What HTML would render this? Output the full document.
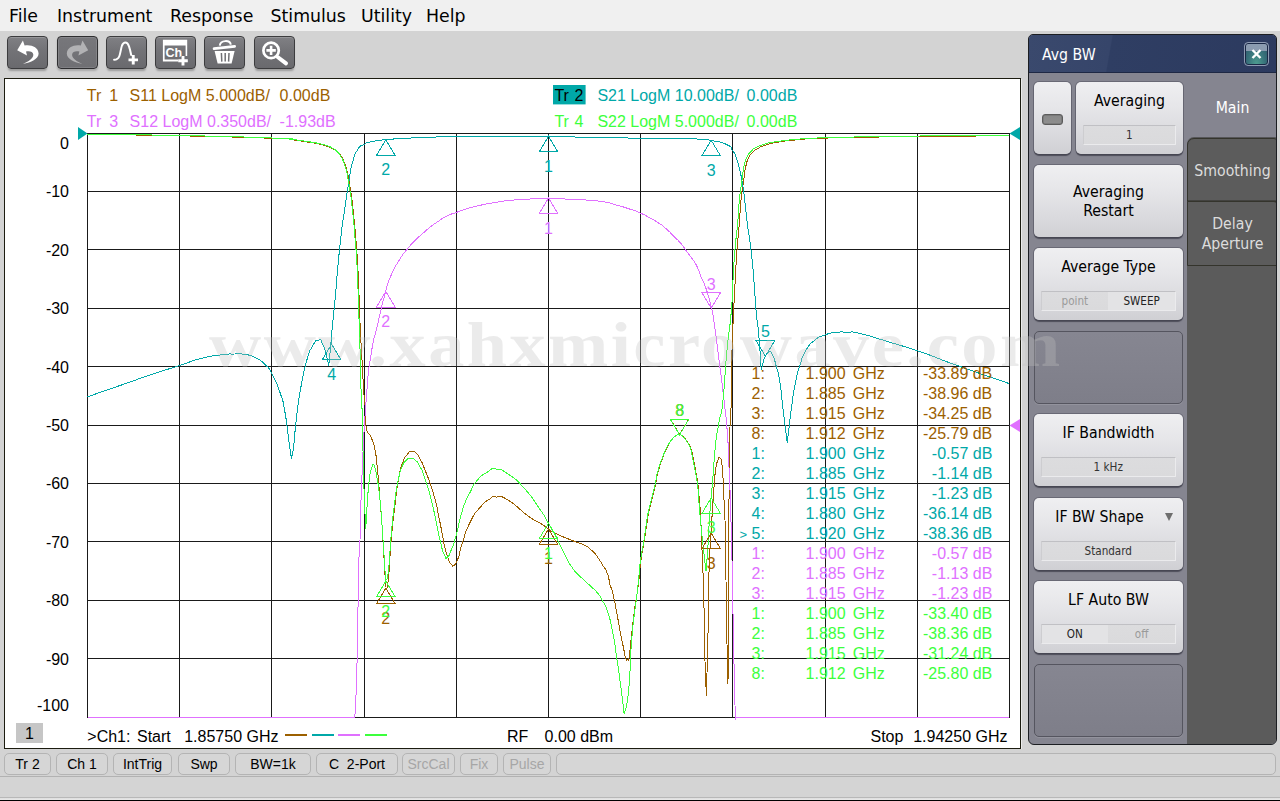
<!DOCTYPE html>
<html lang="en">
<head>
<meta charset="utf-8">
<title>Network Analyzer - Avg BW</title>
<style>
*{box-sizing:border-box;margin:0;padding:0}
html,body{width:1280px;height:801px;overflow:hidden}
body{position:relative;background:#d3d3d3;font-family:"Liberation Sans",sans-serif;color:#000}
.abs{position:absolute}
#menubar{left:0;top:0;width:1280px;height:31px;background:#f0f0f0}
#menubar span{position:absolute;top:4px;font-family:"DejaVu Sans","Liberation Sans",sans-serif;font-size:17.35px;line-height:24px;color:#000;white-space:nowrap}
#toolbar{left:0;top:31px;width:1280px;height:47px;background:#d3d3d3}
.tb{position:absolute;top:36px;width:41px;height:33px;border-radius:4px;border:1px solid #3c3c3e;background:linear-gradient(#808084,#727276 45%,#6a6a6e);box-shadow:0 3px 2px -1px rgba(0,0,0,.27), inset 0 1px 0 rgba(255,255,255,.18)}
.tb svg{position:absolute;left:0;top:0}
.tb.dis{background:linear-gradient(#77777b,#6f6f73);border-color:#2e2e30;box-shadow:0 2px 2px rgba(0,0,0,.2), inset 0 0 0 1px rgba(255,255,255,.12)}
#plotwin{left:4px;top:78px;width:1017px;height:671px;background:#fff;border:1px solid #1c1c10;box-shadow:1px 1px 0 #ececec}
#plot{position:absolute;left:0;top:0}
#wm{left:208.5px;top:308px;font-family:"Liberation Serif",serif;font-weight:bold;font-size:64px;line-height:74px;letter-spacing:2.17px;transform-origin:0 0;transform:scaleX(1.13);color:rgba(192,192,192,.32);white-space:nowrap;pointer-events:none}
/* status bar */
#status{left:0;top:749px;width:1280px;height:28px;background:#d3d3d3}
.sb{position:absolute;top:753px;height:22px;border:1px solid #b4b4b4;border-radius:5px;background:#d6d6d6;font-size:14px;line-height:20px;text-align:center;color:#000;white-space:pre}
.sb.dis{color:#a6a6a6}
#sline{left:0;top:776px;width:1280px;height:1px;background:#b2b2b2}
#bot{left:0;top:777px;width:1280px;height:24px;background:#d4d4d4}
#bot2{left:0;top:797px;width:1280px;height:3px;background:linear-gradient(#b8b8b8 0,#b8b8b8 33%,#dedede 34%,#e8e8e8 100%)}
#bot3{left:0;top:800px;width:1280px;height:1px;background:#000}
/* side panel */
#panel{left:1028px;top:34px;width:249px;height:711px;border-radius:5px 5px 6px 6px;background:#858590;border:1px solid #1c1e22;overflow:hidden}
#ptitle{left:0;top:0;width:249px;height:38px;background:linear-gradient(100deg,#3a496d 0%,#36456a 32.5%,#2f3e63 33%,#2c3a5f 100%);border-bottom:1px solid #1e2844}
#ptitle span{position:absolute;left:13px;top:9px;color:#fff;font-family:"DejaVu Sans Condensed","DejaVu Sans",sans-serif;font-size:15.7px;line-height:22px}
#pclose{left:215px;top:7px;width:25px;height:24px;border-radius:4px;border:1px solid #8e9ab2;box-shadow:inset 0 0 0 1px #1a2846;background:linear-gradient(#8b9bb0 0,#8b9bb0 35%,rgba(0,0,0,0) 35.5%),radial-gradient(ellipse at 50% 100%,#4e9e90 0%,#37707a 55%,#2b5367 100%)}
#tabs{left:158px;top:38px;width:91px;height:672px;background:#5b5b5b}
#tabmain{left:158px;top:38px;width:91px;height:76px;background:#858590}
.tab{position:absolute;left:158px;width:91px;border:1px solid #34342c;box-shadow:0 -1px 0 rgba(40,40,34,.5);background:#5c5c5c;color:#dcdcdc;font-family:"DejaVu Sans Condensed","DejaVu Sans",sans-serif;font-size:15.7px;line-height:20px;text-align:center}
.ptxt{font-family:"DejaVu Sans Condensed","DejaVu Sans",sans-serif;font-size:15.7px;line-height:19px;text-align:center;color:#000;white-space:nowrap}
.pb{position:absolute;border-radius:5px;background:linear-gradient(#efeff1 0,#e6e6e9 35%,#d9d9dd 75%,#d0d0d4 100%);box-shadow:0 2px 1px rgba(60,60,72,.75),0 0 0 1px rgba(70,70,84,.45)}
.pb .ptxt{position:absolute;left:0;right:0}
.slot{position:absolute;border-radius:5px;border:1px solid #55555f;background:linear-gradient(#868691,#7e7e89);box-shadow:0 1px 0 rgba(255,255,255,.12)}
.fld{position:absolute;left:6.5px;right:7px;height:20px;border:1px solid #ebebed;border-top-color:#c0c0c4;border-left-color:#cdcdd0;background:linear-gradient(#dcdcde,#dadadc);font-family:"DejaVu Sans Condensed","DejaVu Sans",sans-serif;font-size:11.6px;line-height:18px;text-align:center;color:#333;border-radius:1px}
.fld i{font-style:normal;position:absolute;top:0;height:18px;width:50%;text-align:center}
.fld .on{background:#e3e3e5;color:#222}
.fld .off{color:#9a9a9a}
</style>
</head>
<body>
<div id="menubar" class="abs">
<span style="left:9px">File</span><span style="left:57px">Instrument</span><span style="left:170px">Response</span><span style="left:270.5px">Stimulus</span><span style="left:361px">Utility</span><span style="left:426px">Help</span>
</div>
<div id="toolbar" class="abs"></div>
<!--TBSTART-->
<div class="tb" style="left:7px"><svg width="39" height="31" viewBox="1 1 39 31"><path d="M10.2 14.2 L15.9 4.6 L17.6 9.6 C24 8.4 31.2 11 31.6 17.5 C31.6 23 24 26.6 15.9 27.9 C21.5 25.6 26.6 22.6 26.3 18.6 C26 15.6 22.5 14.8 19 15.6 L20 19.6 Z" fill="#fff"/></svg></div>
<div class="tb dis" style="left:57px"><svg width="39" height="31" viewBox="1 1 39 31"><path transform="translate(41.4,0) scale(-1,1)" d="M10.2 14.2 L15.9 4.6 L17.6 9.6 C24 8.4 31.2 11 31.6 17.5 C31.6 23 24 26.6 15.9 27.9 C21.5 25.6 26.6 22.6 26.3 18.6 C26 15.6 22.5 14.8 19 15.6 L20 19.6 Z" fill="#b2b2b4"/></svg></div>
<div class="tb" style="left:106px"><svg width="39" height="31" viewBox="1 1 39 31"><path d="M8.1 23.8 C10.5 23.8 12.3 23 13.4 20 C14.6 16.5 15 12 16 9.5 C17 7.2 18.2 6.6 19.4 6.6 C20.8 6.6 22 7.6 23 10.3 C24 13.2 24.6 16 25.2 19" fill="none" stroke="#fff" stroke-width="2" stroke-linecap="round"/><path d="M22.5 23.9 H32 M27.25 19.1 V28.6" stroke="#fff" stroke-width="2.9" fill="none"/></svg></div>
<div class="tb" style="left:155px"><svg width="39" height="31" viewBox="1 1 39 31" font-family="Liberation Sans, sans-serif"><path d="M7.9 3.8 H32.2 V20 H30.6 V9.6 H9.6 V23.4 H23 V25.5 H7.9 Z" fill="#fff"/><text x="10.6" y="21" font-size="12.5" font-weight="bold" fill="#fff">Ch</text><path d="M23.2 24.7 H32.8 M28 19.9 V29.5" stroke="#707074" stroke-width="5" fill="none"/><path d="M23.2 24.7 H32.8 M28 19.9 V29.5" stroke="#fff" stroke-width="2.9" fill="none"/></svg></div>
<div class="tb" style="left:204px"><svg width="39" height="31" viewBox="1 1 39 31"><path d="M15.8 9.6 C16.5 3.8 26 3.8 26.8 8.6" fill="none" stroke="#fff" stroke-width="2"/><path d="M10 12.6 L30.7 10.4" stroke="#fff" stroke-width="2.6" stroke-linecap="round"/><path d="M10.6 15 H30.6 L27.6 27.6 H13.6 Z" fill="#fff"/><path d="M17.4 17 L17.8 25.6 M21.2 17 V25.6 M25 17 L24.6 25.6" stroke="#707074" stroke-width="1.5"/></svg></div>
<div class="tb" style="left:254px"><svg width="39" height="31" viewBox="1 1 39 31"><circle cx="17.1" cy="14.4" r="7.7" fill="none" stroke="#fff" stroke-width="2.7"/><path d="M12.4 14.4 H21.8 M17.1 9.7 V19.1" stroke="#fff" stroke-width="2.6"/><path d="M23.6 21 L32 27.4" stroke="#fff" stroke-width="4" stroke-linecap="round"/></svg></div>
<!--TBEND-->
<div id="plotwin" class="abs"></div>
<svg id="plot" width="1280" height="801" viewBox="0 0 1280 801" font-family="Liberation Sans, sans-serif">
<path d="M87.5 133.0 V718.0M179.5 133.0 V718.0M271.5 133.0 V718.0M364.5 133.0 V718.0M456.5 133.0 V718.0M548.5 133.0 V718.0M640.5 133.0 V718.0M732.5 133.0 V718.0M825.5 133.0 V718.0M917.5 133.0 V718.0M1009.5 133.0 V718.0M87.0 133.5 H1010.0M87.0 191.5 H1010.0M87.0 249.5 H1010.0M87.0 308.5 H1010.0M87.0 366.5 H1010.0M87.0 425.5 H1010.0M87.0 483.5 H1010.0M87.0 541.5 H1010.0M87.0 600.5 H1010.0M87.0 658.5 H1010.0M87.0 717.5 H1010.0" stroke="#1a1a1a" stroke-width="1" fill="none" shape-rendering="crispEdges"/>
<text x="69" y="148.5" font-size="16" text-anchor="end" fill="#000">0</text>
<text x="69" y="197.3" font-size="16" text-anchor="end" fill="#000">-10</text>
<text x="69" y="255.7" font-size="16" text-anchor="end" fill="#000">-20</text>
<text x="69" y="314.1" font-size="16" text-anchor="end" fill="#000">-30</text>
<text x="69" y="372.5" font-size="16" text-anchor="end" fill="#000">-40</text>
<text x="69" y="430.9" font-size="16" text-anchor="end" fill="#000">-50</text>
<text x="69" y="489.3" font-size="16" text-anchor="end" fill="#000">-60</text>
<text x="69" y="547.7" font-size="16" text-anchor="end" fill="#000">-70</text>
<text x="69" y="606.1" font-size="16" text-anchor="end" fill="#000">-80</text>
<text x="69" y="664.5" font-size="16" text-anchor="end" fill="#000">-90</text>
<text x="69" y="711.0" font-size="16" text-anchor="end" fill="#000">-100</text>
<path d="M87.5 134.5C118.3 134.9 118.5 134.5 180.0 135.8C241.5 137.1 234.5 136.9 272.0 138.3C309.5 139.7 281.5 138.8 292.5 139.9C303.5 141.0 296.7 140.4 305.0 141.7C313.3 143.0 310.4 142.3 317.5 143.7C324.6 145.1 321.2 144.3 326.2 146.0C331.2 147.7 328.7 146.7 332.5 148.8C336.3 150.9 334.7 149.7 337.7 152.4C340.7 155.1 339.4 153.6 341.6 157.0C343.8 160.4 342.5 158.2 344.2 162.5C345.9 166.8 345.3 164.6 346.8 170.0C348.3 175.4 347.3 171.9 348.6 178.8C349.9 185.6 349.1 180.1 350.6 190.5C352.1 200.9 351.4 194.3 353.1 210.0C354.8 225.7 354.2 219.2 355.7 237.5C357.2 255.8 356.6 245.8 357.7 265.0C358.8 284.2 358.2 275.0 359.0 295.0C359.8 315.0 359.1 303.3 360.1 325.0C361.1 346.7 360.7 336.7 362.0 360.0C363.3 383.3 363.0 380.0 364.0 395.0C365.0 410.0 364.2 394.2 365.0 405.0C365.8 415.8 364.2 416.7 366.2 427.5C368.3 438.3 368.3 430.0 371.2 437.5C374.2 445.0 372.9 439.2 375.0 450.0C377.1 460.8 375.8 453.3 377.5 470.0C379.2 486.7 378.3 479.2 380.0 500.0C381.7 520.8 380.8 507.5 382.5 532.5C384.2 557.5 383.7 555.8 385.0 575.0C386.3 594.2 386.0 585.0 386.5 590.0C387.2 585.0 387.2 591.7 388.8 575.0C390.3 558.3 389.2 563.3 391.2 540.0C393.3 516.7 392.5 525.8 395.0 505.0C397.5 484.2 396.1 491.8 398.8 477.5C401.4 463.2 400.2 469.6 403.0 462.0C405.8 454.4 404.2 458.4 407.0 454.8C409.8 451.2 408.5 451.9 411.5 451.3C414.5 450.7 413.2 450.4 416.0 453.0C418.8 455.6 417.0 453.3 420.0 459.0C423.0 464.7 420.4 458.0 425.0 470.0C429.6 482.0 428.8 477.5 433.8 495.0C438.8 512.5 435.8 503.3 440.0 522.5C444.2 541.7 442.1 537.9 446.2 552.5C450.4 567.1 450.4 561.7 452.5 566.2C454.2 564.2 454.2 567.9 457.5 560.0C460.8 552.1 458.3 555.0 462.5 542.5C466.7 530.0 464.2 534.2 470.0 522.5C475.8 510.8 473.3 515.4 480.0 507.5C486.7 499.6 484.7 502.2 490.0 498.8C495.3 495.2 490.0 496.6 496.0 497.0C502.0 497.4 497.3 493.7 508.0 500.0C518.7 506.3 517.3 508.3 528.0 516.0C538.7 523.7 533.2 518.7 540.0 523.0C546.8 527.3 543.1 525.3 548.5 528.9C553.9 532.5 548.2 529.9 556.2 533.8C564.2 537.6 563.3 536.9 572.5 540.6C581.7 544.4 577.5 541.9 583.8 545.0C590.0 548.1 586.7 546.0 591.2 550.0C595.8 554.0 593.8 552.0 597.5 557.0C601.2 562.0 599.2 559.4 602.5 565.0C605.8 570.6 605.0 567.1 607.5 573.8C610.0 580.4 608.5 579.6 610.0 585.0C611.5 590.4 610.4 584.8 611.9 590.0C613.4 595.2 612.8 592.9 614.4 600.5C616.0 608.1 614.9 602.7 616.8 612.7C618.7 622.7 617.8 619.2 620.0 630.6C622.2 642.0 621.4 637.6 623.3 646.8C625.2 656.0 624.3 654.0 625.7 658.2C627.1 662.4 626.3 659.5 627.4 659.5C628.5 659.5 627.9 663.5 629.0 658.2C630.1 652.9 629.3 655.5 630.6 643.6C631.9 631.7 631.4 636.0 633.0 622.5C634.6 609.0 634.1 612.8 635.5 603.0C636.9 593.2 635.9 601.7 637.1 593.2C638.3 584.7 637.9 588.6 639.2 577.5C640.5 566.4 639.3 572.1 641.0 560.0C642.7 547.9 642.3 552.9 644.2 541.2C646.1 529.6 645.4 533.3 646.7 525.0C648.0 516.7 646.7 522.9 648.0 516.2C649.3 509.6 648.0 515.4 650.5 505.0C653.0 494.6 652.9 495.8 655.4 485.0C657.9 474.2 655.4 481.7 657.9 472.5C660.4 463.3 659.5 466.2 662.8 457.5C666.1 448.8 664.4 452.5 667.7 446.2C671.0 440.0 669.7 442.3 672.6 438.8C675.5 435.2 674.0 437.1 676.3 435.6C678.6 434.1 676.9 433.7 679.4 434.3C681.9 434.9 681.1 434.8 683.9 437.5C686.7 440.2 685.4 438.8 687.8 442.5C690.2 446.2 689.3 443.8 691.0 448.8C692.7 453.8 691.5 450.4 693.0 457.5C694.5 464.6 693.8 460.8 695.5 470.0C697.2 479.2 696.7 475.0 698.0 485.0C699.3 495.0 698.5 490.0 699.3 500.0C700.1 510.0 699.6 498.3 700.5 515.0C701.4 531.7 701.0 525.0 702.0 550.0C703.0 575.0 702.8 562.7 703.6 590.0C704.4 617.3 703.8 603.3 704.4 632.0C705.0 660.7 704.7 654.6 705.5 676.0C706.3 697.4 706.4 689.5 706.9 696.3C706.9 688.9 706.7 692.8 707.0 674.0C707.3 655.2 707.2 656.3 707.7 640.0C708.2 623.7 708.2 641.7 708.5 625.0C708.8 608.3 708.4 611.7 708.7 590.0C709.0 568.3 708.7 579.0 709.5 560.0C710.3 541.0 709.8 553.0 711.0 533.0C712.2 513.0 712.0 516.8 713.1 500.0C714.2 483.2 713.6 492.5 714.4 482.5C715.2 472.5 714.6 477.1 715.6 470.0C716.6 462.9 716.0 465.2 717.5 461.2C719.0 457.3 718.5 457.3 720.0 458.1C721.5 458.9 720.9 456.4 721.9 463.8C722.9 471.1 722.4 467.9 723.1 480.0C723.8 492.1 723.4 486.7 724.0 500.0C724.6 513.3 724.3 493.3 725.0 520.0C725.7 546.7 725.3 538.7 726.0 580.0C726.7 621.3 726.3 609.3 727.0 644.0C727.7 678.7 727.7 670.7 728.0 684.0C728.1 656.0 728.1 654.7 728.2 600.0C728.3 545.3 728.0 553.3 728.3 520.0C728.6 486.7 728.6 516.7 729.0 500.0C729.4 483.3 729.2 491.7 729.4 470.0C729.6 448.3 729.3 451.7 729.7 435.0C730.1 418.3 730.1 431.7 730.6 420.0C731.1 408.3 730.7 423.3 731.2 400.0C731.7 376.7 731.2 379.3 732.0 350.0C732.8 320.7 732.5 335.7 733.6 312.0C734.7 288.3 734.2 299.7 735.3 279.0C736.4 258.3 735.7 268.0 737.0 250.0C738.3 232.0 737.9 241.7 739.2 225.0C740.5 208.3 739.6 214.5 741.0 200.0C742.4 185.5 742.0 192.2 743.5 181.5C745.0 170.8 743.8 175.7 745.5 168.0C747.2 160.3 746.0 163.6 748.5 158.3C751.0 153.0 749.8 155.3 753.0 152.0C756.2 148.7 753.7 150.8 758.0 148.4C762.3 146.0 759.3 147.0 766.0 144.9C772.7 142.8 768.0 143.8 778.0 142.1C788.0 140.4 783.7 141.1 796.0 139.9C808.3 138.7 797.0 139.4 815.0 138.6C833.0 137.8 815.0 138.3 850.0 137.6C885.0 136.9 867.0 137.1 920.0 136.5C973.0 135.9 979.3 136.0 1009.0 135.8" fill="none" stroke="#9c6000" stroke-width="1" shape-rendering="crispEdges"/>
<path d="M87.5 396.8C100.0 392.4 104.2 391.0 125.0 383.8C145.8 376.5 131.8 381.1 150.0 375.0C168.2 368.9 162.8 370.9 179.5 365.5C196.2 360.1 186.5 362.2 200.0 358.8C213.5 355.2 208.3 356.6 220.0 355.0C231.7 353.4 226.7 354.2 235.0 354.0C243.3 353.8 238.3 353.3 245.0 354.5C251.7 355.7 248.3 354.2 255.0 357.5C261.7 360.8 259.4 359.1 265.0 364.5C270.6 369.9 266.8 364.4 271.8 373.8C276.8 383.1 275.6 379.6 280.0 392.5C284.4 405.4 282.1 396.7 285.0 412.5C287.9 428.3 286.6 424.6 288.8 440.0C290.9 455.4 290.6 452.5 291.5 458.8C292.2 454.2 292.2 457.9 293.8 445.0C295.3 432.1 294.2 437.5 296.2 420.0C298.3 402.5 296.7 411.7 300.0 392.5C303.3 373.3 302.1 377.9 306.2 362.5C310.4 347.1 308.3 353.8 312.5 346.2C316.7 338.8 315.4 340.8 318.8 340.0C322.1 339.2 320.0 338.8 322.5 343.8C325.0 348.8 324.2 347.8 326.2 355.0C328.3 362.2 327.9 362.0 328.8 365.5C329.4 358.7 329.5 358.5 330.8 345.0C332.0 331.5 331.1 340.0 332.5 325.0C333.9 310.0 332.5 326.7 335.0 300.0C337.5 273.3 336.7 275.8 340.0 245.0C343.3 214.2 342.1 228.3 345.0 207.5C347.9 186.7 346.2 197.5 348.8 182.5C351.2 167.5 349.6 173.3 352.5 162.5C355.4 151.7 353.8 156.0 357.5 150.0C361.2 144.0 358.8 147.3 363.8 144.5C368.8 141.7 365.0 143.1 372.5 141.5C380.0 139.9 377.1 140.5 386.2 139.6C395.4 138.7 387.1 139.4 400.0 138.7C412.9 138.0 405.8 138.1 425.0 137.4C444.2 136.7 432.5 137.0 457.5 136.7C482.5 136.4 469.5 136.4 500.0 136.4C530.5 136.4 515.6 136.2 548.9 136.6C582.2 137.0 569.6 137.0 600.0 137.5C630.4 138.0 610.0 137.8 640.0 138.2C670.0 138.6 666.0 138.0 690.0 138.8C714.0 139.6 699.4 138.5 711.9 140.6C724.4 142.7 720.6 141.7 727.5 145.0C734.4 148.3 729.6 146.4 732.5 150.6C735.4 154.8 734.0 151.4 736.2 157.5C738.5 163.6 737.3 160.0 739.4 168.8C741.5 177.5 740.6 172.5 742.5 183.8C744.4 195.0 743.3 188.8 745.0 202.5C746.7 216.2 745.5 209.4 747.5 225.0C749.5 240.6 748.8 231.5 750.9 249.4C753.0 267.3 752.0 257.7 753.8 278.8C755.5 299.8 754.6 293.8 756.2 312.5C757.9 331.2 757.1 315.8 758.8 335.0C760.4 354.2 760.4 358.3 761.2 370.0C762.1 366.7 762.3 364.7 763.8 360.0C765.2 355.3 763.9 358.7 765.6 356.0C767.3 353.3 766.5 352.3 768.8 352.0C771.0 351.7 770.0 350.2 772.5 355.0C775.0 359.8 773.8 357.1 776.2 366.2C778.8 375.4 777.7 367.9 780.0 382.5C782.3 397.1 780.7 389.9 783.1 410.0C785.5 430.1 785.9 431.8 787.3 442.7C788.6 431.8 788.7 429.2 791.2 410.0C793.8 390.8 792.1 400.0 795.0 385.0C797.9 370.0 796.2 376.7 800.0 365.0C803.8 353.3 801.2 358.3 806.2 350.0C811.2 341.7 808.8 345.0 815.0 340.0C821.2 335.0 818.3 337.5 825.0 335.0C831.7 332.5 827.5 333.4 835.0 332.5C842.5 331.6 839.2 331.9 847.5 332.2C855.8 332.6 846.2 330.2 860.0 333.5C873.8 336.8 868.3 335.7 889.0 342.0C909.7 348.3 899.8 344.8 922.0 352.4C944.2 360.0 926.5 354.5 955.5 364.9C984.5 375.3 991.2 377.3 1009.0 383.5" fill="none" stroke="#00a8a8" stroke-width="1" shape-rendering="crispEdges"/>
<path d="M87.5 717.5L354.6 717.5L355.2 712.0C355.6 704.7 355.5 714.0 356.2 690.0C357.0 666.0 356.7 681.7 357.5 640.0C358.3 598.3 357.9 598.3 358.8 565.0C359.6 531.7 358.9 570.0 360.0 540.0C361.1 510.0 359.9 521.7 362.0 475.0C364.1 428.3 363.2 440.0 366.2 400.0C369.2 360.0 367.2 380.0 371.0 355.0C374.8 330.0 372.6 346.1 377.5 325.0C382.4 303.9 381.0 308.4 385.6 291.7C390.2 275.0 386.7 285.6 391.2 275.0C395.8 264.4 394.0 268.8 399.4 260.0C404.8 251.2 401.9 255.6 407.5 248.8C413.1 241.9 410.8 244.8 416.2 239.4C421.7 234.0 418.8 236.9 423.8 232.5C428.8 228.1 426.7 229.8 431.2 226.2C435.8 222.7 432.5 225.2 437.5 221.9C442.5 218.6 440.0 219.4 446.2 216.2C452.5 213.1 449.2 215.1 456.2 212.5C463.3 209.9 458.8 211.1 467.5 208.5C476.2 205.9 473.3 206.8 482.5 204.8C491.7 202.8 486.7 203.9 495.0 202.5C503.3 201.1 495.8 201.8 507.5 200.6C519.2 199.4 516.2 199.7 530.0 199.0C543.8 198.3 533.9 198.2 548.9 198.4C563.9 198.6 558.0 198.7 575.0 199.6C592.0 200.5 586.2 199.4 600.0 201.2C613.8 203.1 606.7 202.5 616.2 205.0C625.8 207.5 620.6 206.1 628.8 208.8C636.9 211.4 633.5 210.0 640.6 213.1C647.7 216.2 644.0 214.8 650.0 218.1C656.0 221.4 653.3 219.5 658.8 223.1C664.2 226.7 661.2 224.4 666.2 228.8C671.2 233.1 668.8 231.2 673.8 236.2C678.8 241.2 677.3 239.2 681.2 243.8C685.2 248.3 682.3 245.4 685.6 250.0C688.9 254.6 687.5 252.1 691.2 257.5C695.0 262.9 693.6 259.6 696.9 266.2C700.2 272.9 698.1 269.9 701.2 277.5C704.4 285.1 702.9 279.0 706.2 289.0C709.6 299.0 708.8 297.2 711.3 307.5C713.8 317.8 711.2 302.5 713.8 320.0C716.3 337.5 715.6 333.3 719.0 360.0C722.4 386.7 721.2 375.4 724.0 400.0C726.8 424.6 725.7 411.2 727.4 433.7C729.1 456.2 728.1 448.6 729.0 467.4C729.9 486.2 729.0 459.1 730.0 490.0C731.0 520.9 730.8 510.0 732.0 560.0C733.2 610.0 732.5 591.7 733.5 640.0C734.5 688.3 734.3 679.2 735.0 705.0C735.7 730.8 735.4 713.3 735.6 717.5L1009.0 717.5" fill="none" stroke="#e070ff" stroke-width="1" shape-rendering="crispEdges"/>
<path d="M87.5 134.3C118.3 134.7 118.5 134.3 180.0 135.5C241.5 136.7 234.5 136.7 272.0 138.0C309.5 139.3 281.5 138.4 292.5 139.5C303.5 140.6 296.7 140.0 305.0 141.2C313.3 142.5 310.4 141.8 317.5 143.2C324.6 144.7 321.2 143.8 326.2 145.5C331.2 147.2 328.8 146.1 332.5 148.2C336.2 150.4 334.6 149.1 337.5 152.0C340.4 154.9 339.2 153.5 341.2 157.0C343.3 160.5 342.1 158.2 343.8 162.5C345.4 166.8 344.8 164.6 346.2 170.0C347.7 175.4 346.8 171.9 348.0 178.8C349.2 185.6 348.5 180.1 350.0 190.5C351.5 200.9 350.8 194.3 352.5 210.0C354.2 225.7 353.5 219.2 355.0 237.5C356.5 255.8 355.9 245.8 357.0 265.0C358.1 284.2 357.5 275.0 358.2 295.0C359.0 315.0 358.6 303.3 359.2 325.0C359.9 346.7 359.9 341.7 360.3 360.0C360.8 378.3 360.1 365.0 360.6 380.0C361.1 395.0 361.3 388.3 361.9 405.0C362.5 421.7 362.1 413.3 362.5 430.0C362.9 446.7 362.7 438.3 363.1 455.0C363.5 471.7 363.2 463.3 363.8 480.0C364.2 496.7 363.9 488.8 364.6 505.0C365.3 521.2 365.4 520.8 365.8 528.8C366.3 519.2 366.3 516.7 367.5 500.0C368.7 483.3 368.1 489.2 369.4 478.8C370.7 468.2 370.1 473.1 371.5 468.5C372.9 463.9 372.2 464.8 373.5 465.0C374.8 465.2 374.2 464.8 375.3 469.0C376.4 473.2 375.3 467.2 376.9 477.5C378.5 487.8 378.0 479.2 380.0 500.0C382.0 520.8 381.1 513.1 383.0 540.0C384.9 566.9 384.7 567.2 385.6 580.8C386.6 577.2 386.6 585.3 388.5 570.0C390.4 554.7 389.1 558.3 391.2 535.0C393.4 511.7 392.5 519.2 395.0 500.0C397.5 480.8 396.4 488.5 398.8 477.5C401.1 466.5 399.6 472.7 402.0 467.0C404.4 461.3 403.2 463.4 406.0 460.5C408.8 457.6 407.5 458.4 410.5 458.2C413.5 458.0 412.0 457.4 415.0 460.0C418.0 462.6 416.2 459.8 419.5 466.0C422.8 472.2 420.7 465.8 425.0 478.8C429.3 491.8 427.5 484.6 432.5 505.0C437.5 525.4 436.0 523.3 440.0 540.0C444.0 556.7 442.0 549.3 444.5 555.0C447.0 560.7 445.2 558.7 447.5 557.0C449.8 555.3 448.3 557.3 451.2 550.0C454.2 542.7 452.5 548.3 456.2 535.0C460.0 521.7 457.9 524.2 462.5 510.0C467.1 495.8 465.0 502.5 470.0 492.5C475.0 482.5 471.7 486.8 477.5 480.0C483.3 473.2 481.3 475.7 487.5 472.0C493.7 468.3 489.2 468.3 496.0 469.0C502.8 469.7 498.7 467.7 508.0 474.0C517.3 480.3 513.3 476.2 524.0 488.0C534.7 499.8 531.8 497.6 540.0 509.4C548.2 521.2 542.7 513.2 548.5 523.4C554.3 533.6 552.0 529.5 557.5 540.0C563.0 550.5 560.0 545.7 565.0 555.0C570.0 564.3 567.1 560.5 572.5 568.0C577.9 575.5 575.4 571.6 581.2 577.5C587.1 583.4 584.6 580.4 590.0 585.6C595.4 590.8 593.4 588.0 597.5 593.0C601.6 598.0 598.9 594.5 602.2 600.5C605.5 606.5 603.9 600.5 607.4 611.1C610.9 621.7 609.6 616.5 612.7 632.2C615.8 647.9 614.1 639.8 616.8 658.2C619.5 676.6 618.5 669.0 620.9 687.4C623.3 705.8 623.0 704.7 624.1 713.4C625.2 709.1 625.5 713.4 627.4 700.4C629.3 687.4 628.5 693.3 629.8 674.4C631.1 655.5 630.0 662.5 631.4 643.6C632.8 624.7 632.3 632.2 633.9 617.6C635.5 603.0 634.7 613.1 636.3 599.7C637.9 586.3 637.3 590.7 638.8 577.5C640.2 564.3 638.9 572.1 640.6 560.0C642.3 547.9 641.9 552.9 643.8 541.2C645.6 529.6 645.0 533.3 646.2 525.0C647.5 516.7 646.2 522.9 647.5 516.2C648.8 509.6 647.5 515.4 650.0 505.0C652.5 494.6 652.5 495.8 655.0 485.0C657.5 474.2 655.0 481.7 657.5 472.5C660.0 463.3 659.2 466.2 662.5 457.5C665.8 448.8 664.2 452.5 667.5 446.2C670.8 440.0 669.6 442.3 672.5 438.8C675.4 435.2 674.0 437.1 676.2 435.6C678.5 434.2 676.9 433.8 679.4 434.4C681.9 435.0 681.0 434.8 683.8 437.5C686.5 440.2 685.2 438.8 687.5 442.5C689.8 446.2 688.9 443.8 690.6 448.8C692.3 453.8 691.0 450.4 692.5 457.5C694.0 464.6 693.3 460.8 695.0 470.0C696.7 479.2 696.2 475.0 697.5 485.0C698.8 495.0 697.9 490.0 698.8 500.0C699.6 510.0 698.6 500.0 700.0 515.0C701.4 530.0 701.0 526.3 703.0 545.0C705.0 563.7 705.0 562.3 706.0 571.0C706.7 562.3 706.9 562.0 708.0 545.0C709.1 528.0 708.4 535.6 709.4 520.0C710.4 504.4 710.1 510.8 711.1 498.3C712.1 485.8 711.4 496.1 712.5 482.5C713.6 468.9 713.1 472.1 714.4 457.5C715.6 442.9 714.8 450.0 716.2 438.8C717.7 427.5 717.5 431.0 718.8 423.8C720.0 416.5 718.6 424.9 720.0 417.0C721.4 409.1 720.7 422.3 723.0 400.0C725.3 377.7 724.2 379.2 727.0 350.0C729.8 320.8 729.2 336.2 731.2 312.5C733.3 288.8 731.9 299.8 733.1 278.8C734.4 257.7 733.5 267.3 735.0 249.4C736.5 231.5 736.0 241.5 737.5 225.0C739.0 208.5 737.9 214.6 739.4 200.0C740.9 185.4 740.4 192.1 741.9 181.2C743.4 170.4 742.1 175.4 743.8 167.5C745.4 159.6 744.4 162.9 746.9 157.5C749.4 152.1 748.1 154.6 751.2 151.2C754.4 147.9 751.7 149.9 756.2 147.5C760.8 145.1 757.9 146.0 765.0 144.0C772.1 142.0 767.1 143.0 777.5 141.5C787.9 140.0 783.8 140.5 796.2 139.4C808.8 138.3 797.1 138.9 815.0 138.1C832.9 137.3 815.0 137.8 850.0 137.1C885.0 136.4 867.0 136.6 920.0 136.0C973.0 135.4 979.3 135.5 1009.0 135.3" fill="none" stroke="#3cff3c" stroke-width="1" shape-rendering="crispEdges"/>
<path d="M78 127 L87.5 133.5 L78 140 Z" fill="#00a8a8"/>
<path d="M1020 127 L1009.5 133.5 L1020 140 Z" fill="#00a8a8"/>
<path d="M1020 419 L1009.5 425.5 L1020 432 Z" fill="#e070ff"/>
<path d="M548.5 528.9 L539.2 544.4 L557.8 544.4 Z" fill="none" stroke="#9c6000" stroke-width="1" shape-rendering="crispEdges"/><text x="548.5" y="564.3" fill="#9c6000" font-size="16" text-anchor="middle">1</text>
<path d="M385.8 588.2 L376.5 603.7 L395.1 603.7 Z" fill="none" stroke="#9c6000" stroke-width="1" shape-rendering="crispEdges"/><text x="385.8" y="623.6" fill="#9c6000" font-size="16" text-anchor="middle">2</text>
<path d="M711.2 533.1 L701.9 548.6 L720.5 548.6 Z" fill="none" stroke="#9c6000" stroke-width="1" shape-rendering="crispEdges"/><text x="711.2" y="568.5" fill="#9c6000" font-size="16" text-anchor="middle">3</text>
<path d="M679.6 434.6 L670.3 419.1 L688.9 419.1 Z" fill="none" stroke="#9c6000" stroke-width="1" shape-rendering="crispEdges"/><text x="679.6" y="415.9" fill="#9c6000" font-size="16" text-anchor="middle">8</text>
<path d="M548.5 136.4 L539.2 151.9 L557.8 151.9 Z" fill="none" stroke="#00a8a8" stroke-width="1" shape-rendering="crispEdges"/><text x="548.5" y="171.8" fill="#00a8a8" font-size="16" text-anchor="middle">1</text>
<path d="M385.8 139.8 L376.5 155.3 L395.1 155.3 Z" fill="none" stroke="#00a8a8" stroke-width="1" shape-rendering="crispEdges"/><text x="385.8" y="175.2" fill="#00a8a8" font-size="16" text-anchor="middle">2</text>
<path d="M711.2 140.3 L701.9 155.8 L720.5 155.8 Z" fill="none" stroke="#00a8a8" stroke-width="1" shape-rendering="crispEdges"/><text x="711.2" y="175.7" fill="#00a8a8" font-size="16" text-anchor="middle">3</text>
<path d="M331.6 344.2 L322.3 359.7 L340.9 359.7 Z" fill="none" stroke="#00a8a8" stroke-width="1" shape-rendering="crispEdges"/><text x="331.6" y="379.6" fill="#00a8a8" font-size="16" text-anchor="middle">4</text>
<path d="M765.4 356.1 L756.1 340.6 L774.7 340.6 Z" fill="none" stroke="#00a8a8" stroke-width="1" shape-rendering="crispEdges"/><text x="765.4" y="337.4" fill="#00a8a8" font-size="16" text-anchor="middle">5</text>
<path d="M548.5 198.1 L539.2 213.6 L557.8 213.6 Z" fill="none" stroke="#e070ff" stroke-width="1" shape-rendering="crispEdges"/><text x="548.5" y="233.5" fill="#e070ff" font-size="16" text-anchor="middle">1</text>
<path d="M385.8 291.5 L376.5 307.0 L395.1 307.0 Z" fill="none" stroke="#e070ff" stroke-width="1" shape-rendering="crispEdges"/><text x="385.8" y="326.9" fill="#e070ff" font-size="16" text-anchor="middle">2</text>
<path d="M711.2 308.2 L701.9 292.7 L720.5 292.7 Z" fill="none" stroke="#e070ff" stroke-width="1" shape-rendering="crispEdges"/><text x="711.2" y="289.5" fill="#e070ff" font-size="16" text-anchor="middle">3</text>
<path d="M548.5 523.2 L539.2 538.7 L557.8 538.7 Z" fill="none" stroke="#3cff3c" stroke-width="1" shape-rendering="crispEdges"/><text x="548.5" y="558.6" fill="#3cff3c" font-size="16" text-anchor="middle">1</text>
<path d="M385.8 581.1 L376.5 596.6 L395.1 596.6 Z" fill="none" stroke="#3cff3c" stroke-width="1" shape-rendering="crispEdges"/><text x="385.8" y="616.5" fill="#3cff3c" font-size="16" text-anchor="middle">2</text>
<path d="M711.2 498.0 L701.9 513.5 L720.5 513.5 Z" fill="none" stroke="#3cff3c" stroke-width="1" shape-rendering="crispEdges"/><text x="711.2" y="533.4" fill="#3cff3c" font-size="16" text-anchor="middle">3</text>
<path d="M679.6 434.7 L670.3 419.2 L688.9 419.2 Z" fill="none" stroke="#3cff3c" stroke-width="1" shape-rendering="crispEdges"/><text x="679.6" y="416.0" fill="#3cff3c" font-size="16" text-anchor="middle">8</text>
<text y="100.8" font-size="16" fill="#9c6000"><tspan x="86.8">Tr</tspan><tspan x="109.2">1</tspan></text><text y="100.8" font-size="16" fill="#9c6000"><tspan x="129.6">S11 LogM 5.000dB/</tspan><tspan x="279.6">0.00dB</tspan></text>
<text y="126.7" font-size="16" fill="#e070ff"><tspan x="86.8">Tr</tspan><tspan x="109.2">3</tspan></text><text y="126.7" font-size="16" fill="#e070ff"><tspan x="129.6">S12 LogM 0.350dB/</tspan><tspan x="279.6">-1.93dB</tspan></text>
<rect x="553" y="85" width="32.6" height="19.4" fill="#00a8a8"/><text y="100.8" font-size="16" fill="#000"><tspan x="554.4">Tr</tspan><tspan x="574.6">2</tspan></text><text y="100.8" font-size="16" fill="#00a8a8"><tspan x="597.4">S21 LogM 10.00dB/</tspan><tspan x="746.6">0.00dB</tspan></text>
<text y="126.7" font-size="16" fill="#3cff3c"><tspan x="554.4">Tr</tspan><tspan x="574.6">4</tspan></text><text y="126.7" font-size="16" fill="#3cff3c"><tspan x="597.4">S22 LogM 5.000dB/</tspan><tspan x="746.6">0.00dB</tspan></text>
<text y="378.8" font-size="16" fill="#9c6000"><tspan x="751.5">1:</tspan><tspan x="805.6">1.900</tspan><tspan x="852.8">GHz</tspan><tspan x="992.3" text-anchor="end">-33.89 dB</tspan></text>
<text y="398.8" font-size="16" fill="#9c6000"><tspan x="751.5">2:</tspan><tspan x="805.6">1.885</tspan><tspan x="852.8">GHz</tspan><tspan x="992.3" text-anchor="end">-38.96 dB</tspan></text>
<text y="418.8" font-size="16" fill="#9c6000"><tspan x="751.5">3:</tspan><tspan x="805.6">1.915</tspan><tspan x="852.8">GHz</tspan><tspan x="992.3" text-anchor="end">-34.25 dB</tspan></text>
<text y="438.8" font-size="16" fill="#9c6000"><tspan x="751.5">8:</tspan><tspan x="805.6">1.912</tspan><tspan x="852.8">GHz</tspan><tspan x="992.3" text-anchor="end">-25.79 dB</tspan></text>
<text y="458.8" font-size="16" fill="#00a8a8"><tspan x="751.5">1:</tspan><tspan x="805.6">1.900</tspan><tspan x="852.8">GHz</tspan><tspan x="992.3" text-anchor="end">-0.57 dB</tspan></text>
<text y="478.8" font-size="16" fill="#00a8a8"><tspan x="751.5">2:</tspan><tspan x="805.6">1.885</tspan><tspan x="852.8">GHz</tspan><tspan x="992.3" text-anchor="end">-1.14 dB</tspan></text>
<text y="498.8" font-size="16" fill="#00a8a8"><tspan x="751.5">3:</tspan><tspan x="805.6">1.915</tspan><tspan x="852.8">GHz</tspan><tspan x="992.3" text-anchor="end">-1.23 dB</tspan></text>
<text y="518.8" font-size="16" fill="#00a8a8"><tspan x="751.5">4:</tspan><tspan x="805.6">1.880</tspan><tspan x="852.8">GHz</tspan><tspan x="992.3" text-anchor="end">-36.14 dB</tspan></text>
<text y="538.8" font-size="16" fill="#00a8a8"><tspan x="739.5" font-size="13">&gt;</tspan><tspan x="751.5">5:</tspan><tspan x="805.6">1.920</tspan><tspan x="852.8">GHz</tspan><tspan x="992.3" text-anchor="end">-38.36 dB</tspan></text>
<text y="558.8" font-size="16" fill="#e070ff"><tspan x="751.5">1:</tspan><tspan x="805.6">1.900</tspan><tspan x="852.8">GHz</tspan><tspan x="992.3" text-anchor="end">-0.57 dB</tspan></text>
<text y="578.8" font-size="16" fill="#e070ff"><tspan x="751.5">2:</tspan><tspan x="805.6">1.885</tspan><tspan x="852.8">GHz</tspan><tspan x="992.3" text-anchor="end">-1.13 dB</tspan></text>
<text y="598.8" font-size="16" fill="#e070ff"><tspan x="751.5">3:</tspan><tspan x="805.6">1.915</tspan><tspan x="852.8">GHz</tspan><tspan x="992.3" text-anchor="end">-1.23 dB</tspan></text>
<text y="618.8" font-size="16" fill="#3cff3c"><tspan x="751.5">1:</tspan><tspan x="805.6">1.900</tspan><tspan x="852.8">GHz</tspan><tspan x="992.3" text-anchor="end">-33.40 dB</tspan></text>
<text y="638.8" font-size="16" fill="#3cff3c"><tspan x="751.5">2:</tspan><tspan x="805.6">1.885</tspan><tspan x="852.8">GHz</tspan><tspan x="992.3" text-anchor="end">-38.36 dB</tspan></text>
<text y="658.8" font-size="16" fill="#3cff3c"><tspan x="751.5">3:</tspan><tspan x="805.6">1.915</tspan><tspan x="852.8">GHz</tspan><tspan x="992.3" text-anchor="end">-31.24 dB</tspan></text>
<text y="678.8" font-size="16" fill="#3cff3c"><tspan x="751.5">8:</tspan><tspan x="805.6">1.912</tspan><tspan x="852.8">GHz</tspan><tspan x="992.3" text-anchor="end">-25.80 dB</tspan></text>
<rect x="16" y="723" width="27" height="20" fill="#c6c6c6"/>
<text x="29.5" y="738.8" font-size="16" text-anchor="middle" fill="#000">1</text>
<text y="741.8" font-size="16" fill="#000"><tspan x="87.3">&gt;Ch1:</tspan><tspan x="137">Start</tspan><tspan x="184.2">1.85750 GHz</tspan><tspan x="507">RF</tspan><tspan x="544.6">0.00 dBm</tspan><tspan x="870.5">Stop</tspan><tspan x="913.2">1.94250 GHz</tspan></text>
<rect x="285" y="734" width="22" height="2" fill="#9c6000"/>
<rect x="312" y="734" width="22" height="2" fill="#00a8a8"/>
<rect x="338" y="734" width="22" height="2" fill="#e070ff"/>
<rect x="365" y="734" width="22" height="2" fill="#3cff3c"/>
</svg>

<div id="status" class="abs"></div>
<div class="sb" style="left:4px;width:47px">Tr 2</div>
<div class="sb" style="left:56px;width:52px">Ch 1</div>
<div class="sb" style="left:113px;width:59px">IntTrig</div>
<div class="sb" style="left:178px;width:52px">Swp</div>
<div class="sb" style="left:235px;width:76px">BW=1k</div>
<div class="sb" style="left:316px;width:82px">C  2-Port</div>
<div class="sb dis" style="left:402px;width:53px">SrcCal</div>
<div class="sb dis" style="left:460px;width:38px">Fix</div>
<div class="sb dis" style="left:503px;width:48px">Pulse</div>
<div class="sb" style="left:556px;width:720px"></div>
<div id="sline" class="abs"></div>
<div id="bot" class="abs"></div><div id="bot2" class="abs"></div><div id="bot3" class="abs"></div>

<div id="panel" class="abs">
 <div id="tabs" class="abs"></div>
 <div id="tabmain" class="abs"></div>
 <div class="abs ptxt" style="left:158px;top:63px;width:91px;color:#fff">Main</div>
 <div class="tab" style="top:103px;height:64px;border-radius:7px 4px 0 0;padding-top:22px">Smoothing</div>
 <div class="tab" style="top:166px;height:65px;border-radius:0 4px 0 0;padding-top:12px">Delay<br>Aperture</div>
 <div id="ptitle" class="abs"><span>Avg BW</span>
  <div id="pclose" class="abs"><svg width="23" height="22" viewBox="0 0 23 22"><path d="M7.5 7 L15.5 15 M15.5 7 L7.5 15" stroke="#fff" stroke-width="2.4" stroke-linecap="butt"/></svg></div>
 </div>
 <!-- buttons (panel-local coords: x-1029, y-36) -->
 <div class="pb" style="left:5px;top:47px;width:37px;height:72px"><div class="abs" style="left:8px;top:32px;width:21px;height:11px;border-radius:3px;background:linear-gradient(#888,#8e8e8e);border:1px solid #5c5c5c;box-shadow:inset 0 0 0 .5px #6a6a6a"></div></div>
 <div class="pb" style="left:47px;top:47px;width:107px;height:72px"><div class="ptxt" style="top:9px">Averaging</div><div class="fld" style="top:43px">1</div></div>
 <div class="pb" style="left:5px;top:130px;width:149px;height:72px"><div class="ptxt" style="top:17px">Averaging<br>Restart</div></div>
 <div class="pb" style="left:5px;top:213px;width:149px;height:72px"><div class="ptxt" style="top:9px">Average Type</div><div class="fld" style="top:43px"><i class="off" style="left:0">point</i><i class="on" style="left:50%">SWEEP</i></div></div>
 <div class="slot" style="left:5px;top:296px;width:149px;height:73px"></div>
 <div class="pb" style="left:5px;top:379px;width:149px;height:72px"><div class="ptxt" style="top:9px">IF Bandwidth</div><div class="fld" style="top:43px">1 kHz</div></div>
 <div class="pb" style="left:5px;top:463px;width:149px;height:72px"><div class="ptxt" style="top:9px;right:18px">IF BW Shape</div><div class="abs" style="left:131px;top:15px;width:0;height:0;border-left:4.5px solid transparent;border-right:4.5px solid transparent;border-top:8px solid #6e6e6e"></div><div class="fld" style="top:43px">Standard</div></div>
 <div class="pb" style="left:5px;top:546px;width:149px;height:72px"><div class="ptxt" style="top:9px">LF Auto BW</div><div class="fld" style="top:43px"><i class="on" style="left:0">ON</i><i class="off" style="left:50%">off</i></div></div>
 <div class="slot" style="left:5px;top:629px;width:149px;height:73px"></div>
</div>
<div id="wm" class="abs">www.xahxmicrowave.com</div>
</body>
</html>
